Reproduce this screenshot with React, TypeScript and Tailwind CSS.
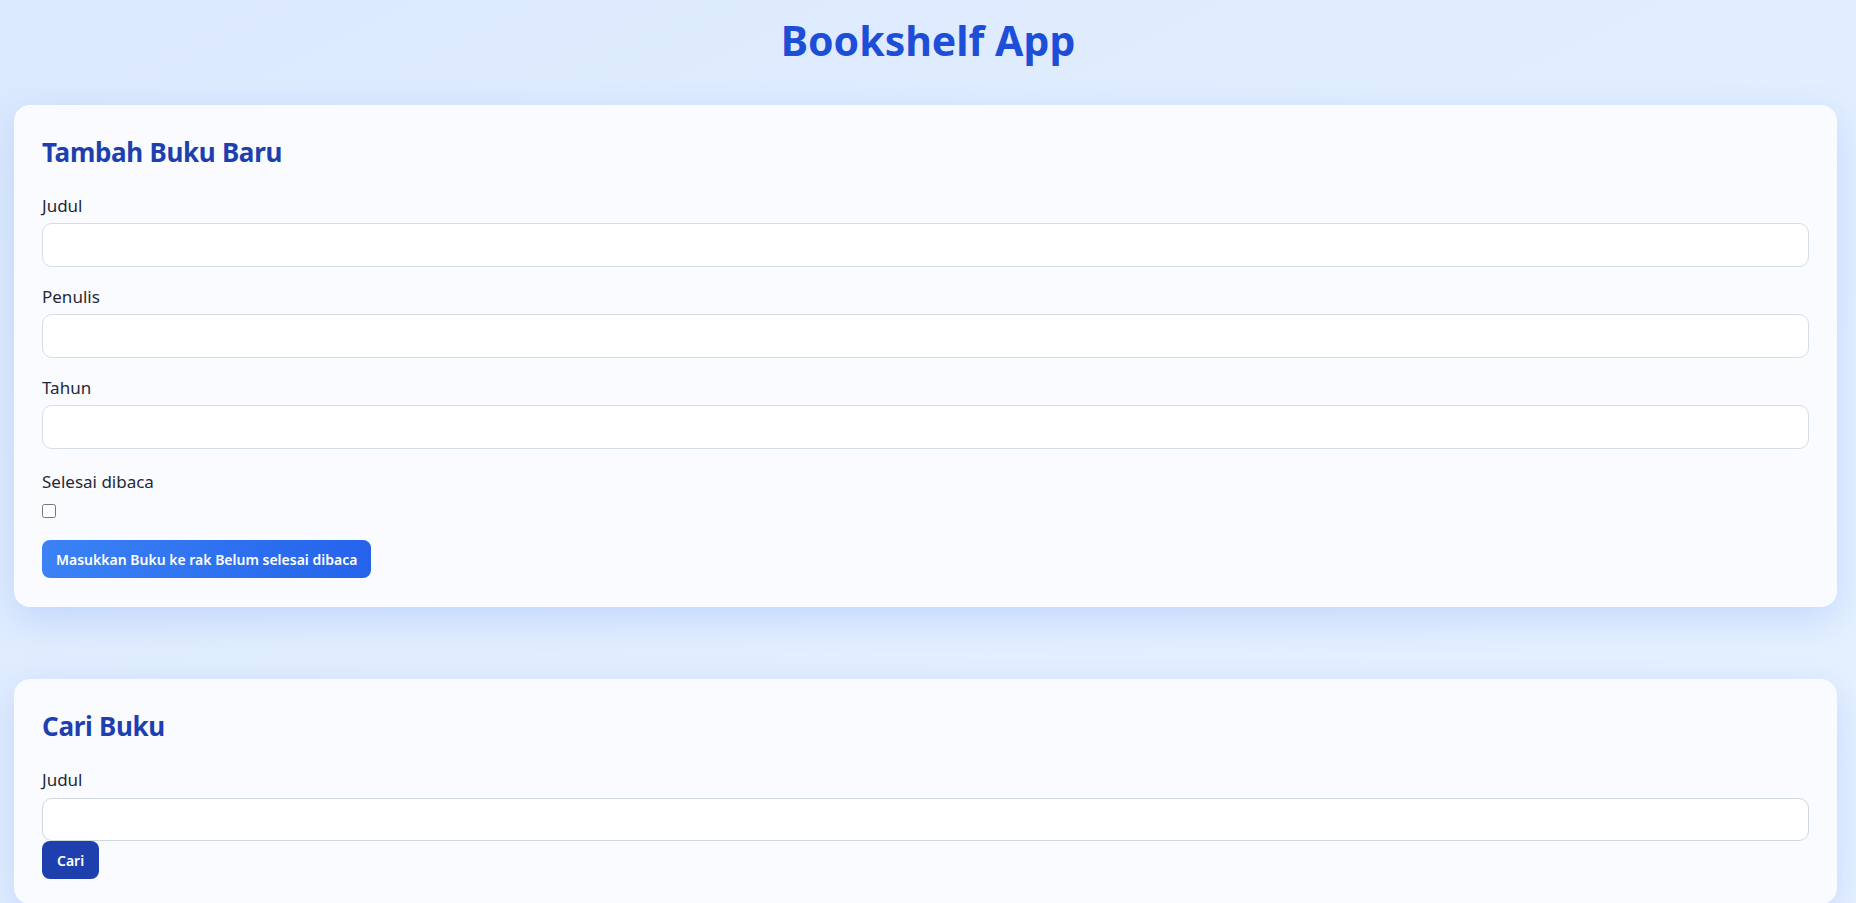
import React from "react";

const font = { fontFamily: '"Noto Sans", "Open Sans", sans-serif' };

function Field({ label, id }: { label: string; id: string }) {
  return (
    <div className="flex flex-col">
      <label htmlFor={id} className="text-[17px] leading-[22px] text-[#1f2937]">
        {label}
      </label>
      <input
        id={id}
        type="text"
        className="mt-[6px] h-[44px] w-full rounded-[10px] border border-[#d5dde9] bg-white px-3 outline-none"
      />
    </div>
  );
}

export default function App() {
  return (
    <div
      style={font}
      className="min-h-screen w-full bg-linear-to-br from-[#dbe9fd] via-[#e2eeff] to-[#e6f1ff] pb-10"
    >
      <header className="pt-[16px] mb-[41px]">
        <h1 className="text-center text-[41px] leading-[48px] font-bold text-[#1d4ed8]">
          Bookshelf App
        </h1>
      </header>
      <main className="flex flex-col gap-[72px] pl-[14px] pr-[19px]">
        <section className="rounded-2xl bg-[#f9fbff] px-[28px] pt-[29px] pb-[29px] shadow-[0_12px_36px_rgba(37,99,235,0.16)]">
          <h2 className="text-[26px] leading-[36px] font-bold tracking-[-0.3px] text-[#1e40af]">
            Tambah Buku Baru
          </h2>
          <form className="mt-[25px] flex flex-col" onSubmit={(e) => e.preventDefault()}>
            <div className="flex flex-col gap-[19px]">
              <Field label="Judul" id="judul" />
              <Field label="Penulis" id="penulis" />
              <Field label="Tahun" id="tahun" />
            </div>
            <div className="mt-[22px] flex flex-col">
              <label htmlFor="selesai" className="text-[17px] leading-[22px] text-[#1f2937]">
                Selesai dibaca
              </label>
              <input
                id="selesai"
                type="checkbox"
                className="mt-[11px] h-[14px] w-[14px] self-start"
              />
            </div>
            <div className="mt-[22px]">
              <button
                type="submit"
                className="h-[38px] rounded-lg bg-linear-to-r from-[#3b82f6] to-[#2563eb] px-[14px] text-[14px] font-semibold text-white"
              >
                Masukkan Buku ke rak Belum selesai dibaca
              </button>
            </div>
          </form>
        </section>

        <section className="rounded-2xl bg-[#f9fbff] px-[28px] pt-[29px] pb-[25px] shadow-[0_12px_36px_rgba(37,99,235,0.16)]">
          <h2 className="text-[26px] leading-[36px] font-bold tracking-[-0.3px] text-[#1e40af]">
            Cari Buku
          </h2>
          <form className="mt-[25px] flex flex-col" onSubmit={(e) => e.preventDefault()}>
            <label htmlFor="cari" className="text-[17px] leading-[22px] text-[#1f2937]">
              Judul
            </label>
            <input
              id="cari"
              type="text"
              className="mt-[7px] h-[43px] w-full rounded-[10px] border border-[#cfd7e3] bg-white px-3 outline-none"
            />
            <div>
              <button
                type="submit"
                className="h-[38px] rounded-lg bg-[#1e40af] px-[15px] text-[14px] font-semibold text-white"
              >
                Cari
              </button>
            </div>
          </form>
        </section>
      </main>
    </div>
  );
}
